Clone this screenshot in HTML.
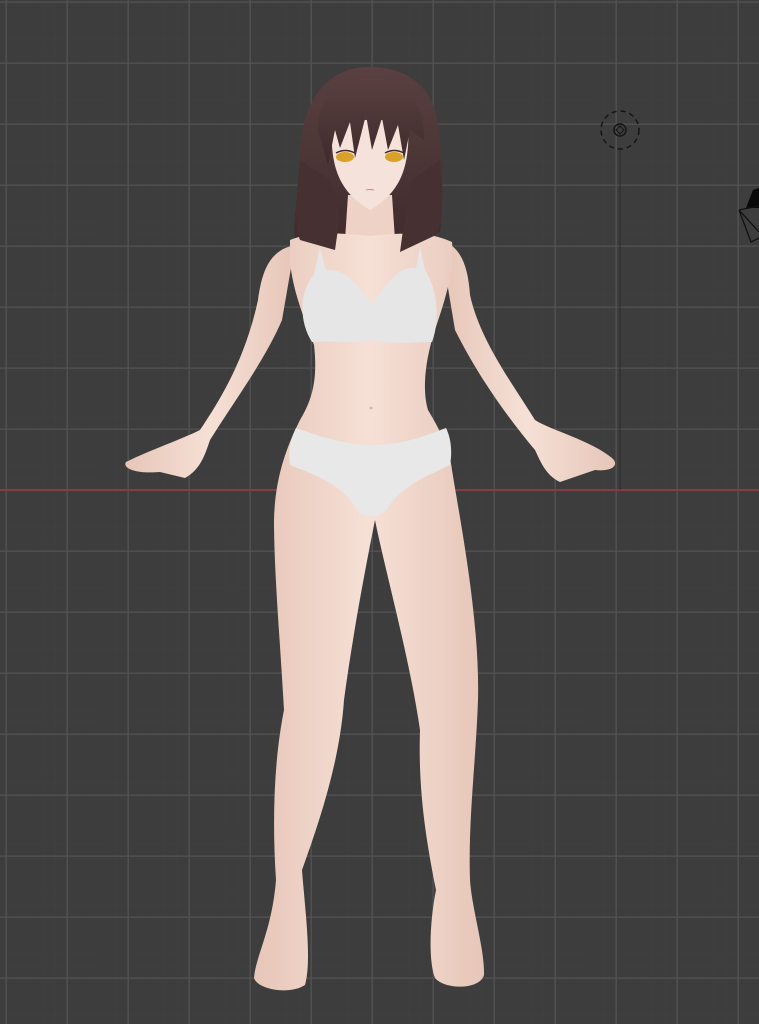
<!DOCTYPE html>
<html><head><meta charset="utf-8"><style>
html,body{margin:0;padding:0;width:759px;height:1024px;overflow:hidden;background:#3d3d3d}
svg{display:block}
</style></head><body>
<svg width="759" height="1024" viewBox="0 0 759 1024" xmlns="http://www.w3.org/2000/svg">
<defs>
<pattern id="minor" x="6" y="2" width="12.2" height="12.2" patternUnits="userSpaceOnUse">
<path d="M0 0H12.2M0 0V12.2" stroke="#404040" stroke-width="1" fill="none"/>
</pattern>
<pattern id="major" x="5.5" y="1.5" width="61" height="61" patternUnits="userSpaceOnUse">
<path d="M0 0.5H61M0.5 0V61" stroke="#535353" stroke-width="1.6" fill="none"/>
</pattern>
<linearGradient id="skin" x1="0" x2="1">
<stop offset="0" stop-color="#e6c6b8"/><stop offset="0.5" stop-color="#f6e0d6"/><stop offset="1" stop-color="#e6c6b8"/>
</linearGradient>
<linearGradient id="hair" x1="0" y1="0" x2="0" y2="1">
<stop offset="0" stop-color="#5a4040"/><stop offset="1" stop-color="#3e2a2c"/>
</linearGradient>
</defs>
<rect width="759" height="1024" fill="#3d3d3d"/>
<rect width="759" height="1024" fill="url(#minor)"/>
<rect width="759" height="1024" fill="url(#major)"/>
<rect x="0" y="489" width="759" height="2" fill="#8a3a44"/>
<line x1="620" y1="150" x2="620" y2="490" stroke="#2a2a2a" stroke-width="1"/>
<circle cx="620" cy="130" r="19" fill="none" stroke="#151515" stroke-width="1.5" stroke-dasharray="5 4"/>
<circle cx="620" cy="130" r="6" fill="none" stroke="#151515" stroke-width="1.5"/>
<path d="M620 126L624 130L620 134L616 130Z" fill="none" stroke="#151515" stroke-width="1"/>
<path d="M753 190L759 188V208H746Z" fill="#0a0a0a"/>
<path d="M739 210L759 206M739 210L751 242L759 238M739 210L759 232" fill="none" stroke="#111" stroke-width="1.3"/>
<path d="M365 67C320 70 300 110 300 160C298 200 292 225 295 240L320 240L345 253L395 253L440 232C444 200 443 140 435 110C425 80 400 66 365 67Z" fill="url(#hair)"/>
<path d="M295 245C270 250 262 270 258 300C245 360 220 400 200 430C180 440 150 450 126 462C122 468 135 474 160 472L185 478C200 470 205 455 210 440C235 400 265 360 282 320Z" fill="url(#skin)"/>
<path d="M440 240C460 245 468 265 470 295C480 340 510 380 535 420C550 430 590 440 612 458C620 465 612 472 595 470L560 482C545 475 540 460 535 450C510 420 480 380 455 330Z" fill="url(#skin)"/>
<path d="M348 195L392 195L395 240L345 240Z" fill="#efd2c6"/>
<path d="M290 240C310 232 330 232 370 236C410 232 430 232 452 242C455 270 445 300 435 330C425 360 422 390 428 410C440 430 450 450 452 470C460 520 480 620 478 700C476 760 468 820 470 880C472 910 485 950 484 975C480 990 445 990 435 978C428 960 430 920 436 890C426 840 418 790 420 730C410 660 385 570 375 520C365 570 352 640 344 700C340 760 320 820 302 870C305 910 312 960 305 985C290 995 258 990 254 978C256 955 272 930 276 880C272 820 274 760 284 710C280 640 274 570 274 520C275 480 285 450 300 420C312 400 318 380 314 345C305 320 292 290 290 260Z" fill="url(#skin)"/>
<path d="M320 247L314 275C300 290 298 320 312 342C340 340 350 345 372 340C392 345 410 342 432 342C440 320 438 290 425 270L420 247L416 268C400 265 385 285 372 305C358 285 345 268 326 270Z" fill="#e6e6e6"/>
<path d="M296 428C330 440 350 445 372 445C400 445 420 438 446 428C452 440 452 455 450 465C430 475 400 485 385 512C378 518 365 518 358 512C345 485 315 475 290 465C288 450 290 440 296 428Z" fill="#e8e8e8"/>
<path d="M332 120C330 160 335 190 370 210C405 190 410 160 408 120Z" fill="#f5e2da"/>
<path d="M318 130C318 95 340 78 372 78C405 78 425 100 424 140L410 130L404 160L398 125L388 150L382 118L372 150L366 115L355 158L350 122L340 148L335 130L328 165Z" fill="url(#hair)"/>
<path d="M300 160C296 200 294 225 300 240L335 250L340 215L330 180Z" fill="#463032"/>
<path d="M440 160C444 200 442 225 436 235L400 252L405 215L412 180Z" fill="#463032"/>
<ellipse cx="345" cy="157" rx="9" ry="5" fill="#d9a12a"/>
<ellipse cx="394" cy="157" rx="9" ry="5" fill="#d9a12a"/>
<path d="M336 153Q345 148 355 153M385 153Q394 148 404 153" stroke="#3a2a2a" stroke-width="1.5" fill="none"/>
<path d="M366 190Q370 189 374 190" stroke="#c09090" stroke-width="1" fill="none"/>
<circle cx="371" cy="408" r="1.5" fill="#d8b8a8"/>
</svg>
</body></html>
